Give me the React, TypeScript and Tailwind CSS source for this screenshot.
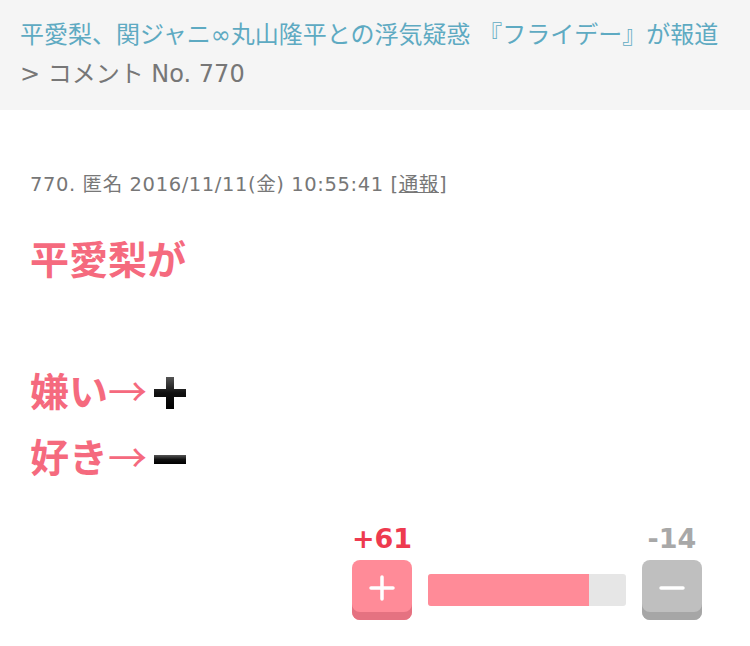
import React from "react";

const jp = { fontFamily: '"Noto Sans CJK JP", "Noto Sans", sans-serif' };
const mixed = { fontFamily: '"DejaVu Sans", "Noto Sans CJK JP", sans-serif' };

function EmojiPlus() {
  return (
    <svg width="34" height="34" viewBox="0 0 34 34" className="inline-block align-[-4px] ml-[6px]">
      <defs>
        <linearGradient id="gp" x1="0" y1="0" x2="0" y2="1">
          <stop offset="0" stopColor="#555" />
          <stop offset="0.5" stopColor="#111" />
          <stop offset="1" stopColor="#000" />
        </linearGradient>
      </defs>
      <path d="M13 1h8v12h12v8H21v12h-8V21H1v-8h12z" fill="url(#gp)" />
    </svg>
  );
}

function EmojiMinus() {
  return (
    <svg width="34" height="34" viewBox="0 0 34 34" className="inline-block align-[-4px] ml-[6px]">
      <defs>
        <linearGradient id="gm" x1="0" y1="0" x2="0" y2="1">
          <stop offset="0" stopColor="#555" />
          <stop offset="0.5" stopColor="#111" />
          <stop offset="1" stopColor="#000" />
        </linearGradient>
      </defs>
      <rect x="1" y="13" width="32" height="9" fill="url(#gm)" />
    </svg>
  );
}

export default function App() {
  const plus = 61;
  const minus = 14;
  const ratio = (plus / (plus + minus)) * 100;

  return (
    <div className="w-[750px] h-[646px] bg-white overflow-hidden" style={jp}>
      {/* Breadcrumb header */}
      <div className="h-[110px] bg-[#f5f5f5] px-[20px] pt-[16px]" style={mixed}>
        <div className="text-[24px] leading-[39px] text-[#5eaac2] whitespace-nowrap">
          平愛梨、関ジャニ∞丸山隆平との浮気疑惑 『フライデー』が報道
        </div>
        <div className="text-[24px] leading-[39px] text-[#777]">&gt; コメント No. 770</div>
      </div>

      {/* Comment */}
      <div className="px-[30px] pt-[62px]">
        <div
          className="text-[19.5px] leading-[26px] tracking-[0.6px] text-[#777] whitespace-nowrap"
          style={mixed}
        >
          770. 匿名 2016/11/11(金) 10:55:41 [<span className="underline">通報</span>]
        </div>
        <div className="mt-[26px] text-[39px] leading-[66px] font-bold text-[#f56a7e]">
          <div>平愛梨が</div>
          <div>&nbsp;</div>
          <div>
            嫌い<span className="font-normal">→</span>
            <EmojiPlus />
          </div>
          <div>
            好き<span className="font-normal">→</span>
            <EmojiMinus />
          </div>
        </div>
      </div>

      {/* Votes */}
      <div className="flex justify-end items-end gap-[16px] pr-[48px] mt-[34px]">
        <div className="flex flex-col items-center w-[60px]">
          <div
            className="text-[27px] leading-[34px] font-bold text-[#ee3a4f]"
            style={{ fontFamily: '"DejaVu Sans", sans-serif' }}
          >
            +{plus}
          </div>
          <div className="mt-[4px] w-[60px] h-[60px] rounded-[8px] bg-[#ff8b98] shadow-[inset_0_-8px_0_#e57281] flex items-center justify-center pb-[4px]">
            <svg width="28" height="28" viewBox="0 0 28 28">
              <path d="M14 3v22M3 14h22" stroke="#fff" strokeWidth="3.5" strokeLinecap="round" />
            </svg>
          </div>
        </div>
        <div className="w-[198px] h-[32px] mb-[14px] rounded-[3px] bg-[#e6e6e6] overflow-hidden flex">
          <div className="h-full bg-[#ff8b98]" style={{ width: `${ratio}%` }} />
        </div>
        <div className="flex flex-col items-center w-[60px]">
          <div
            className="text-[27px] leading-[34px] font-bold text-[#a8a8a8]"
            style={{ fontFamily: '"DejaVu Sans", sans-serif' }}
          >
            -{minus}
          </div>
          <div className="mt-[4px] w-[60px] h-[60px] rounded-[8px] bg-[#bfbfbf] shadow-[inset_0_-8px_0_#a6a6a6] flex items-center justify-center pb-[4px]">
            <svg width="28" height="28" viewBox="0 0 28 28">
              <path d="M3 14h22" stroke="#fff" strokeWidth="3.5" strokeLinecap="round" />
            </svg>
          </div>
        </div>
      </div>
    </div>
  );
}
